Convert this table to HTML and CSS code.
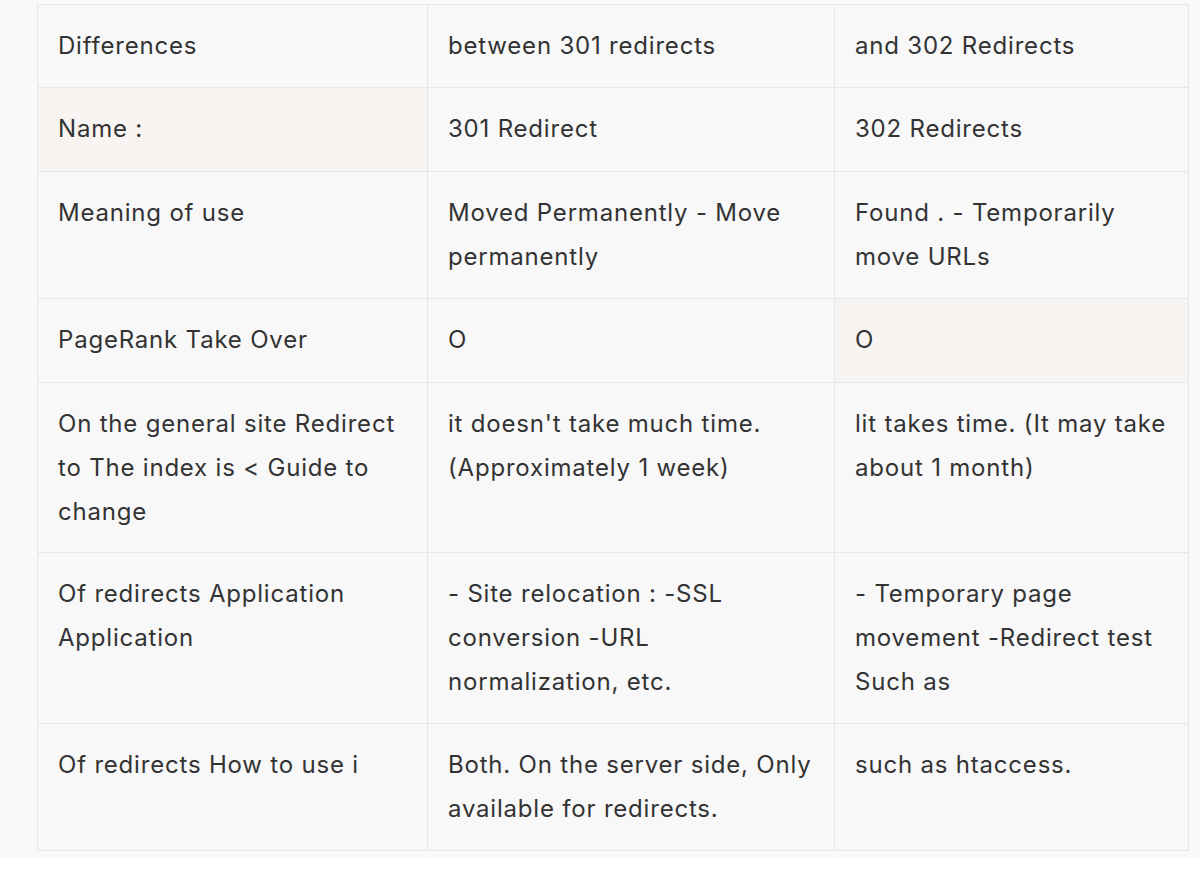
FILE: index.html
```html
<!DOCTYPE html>
<html lang="en">
<head>
<meta charset="utf-8">
<title>301 vs 302 Redirects</title>
<link rel="stylesheet" href="styles.css">
</head>
<body>
<div class="sheet">
  <table class="compare">
    <colgroup>
      <col class="c1"><col class="c2"><col class="c3">
    </colgroup>
    <tbody>
      <tr>
        <td>Differences</td>
        <td>between 301 redirects</td>
        <td>and 302 Redirects</td>
      </tr>
      <tr class="r-84">
        <td class="tint">Name :</td>
        <td>301 Redirect</td>
        <td>302 Redirects</td>
      </tr>
      <tr>
        <td>Meaning of use</td>
        <td>Moved Permanently - Move<br>permanently</td>
        <td>Found . - Temporarily<br>move URLs</td>
      </tr>
      <tr class="r-84">
        <td>PageRank Take Over</td>
        <td>O</td>
        <td class="tint">O</td>
      </tr>
      <tr class="r-170">
        <td>On the general site Redirect<br>to The index is &lt; Guide to<br>change</td>
        <td>it doesn't take much time.<br>(Approximately 1 week)</td>
        <td>lit takes time. (It may take<br>about 1 month)</td>
      </tr>
      <tr>
        <td>Of redirects Application<br>Application</td>
        <td>- Site relocation : -SSL<br>conversion -URL<br>normalization, etc.</td>
        <td>- Temporary page<br>movement -Redirect test<br>Such as</td>
      </tr>
      <tr>
        <td>Of redirects How to use i</td>
        <td>Both. On the server side, Only<br>available for redirects.</td>
        <td>such as htaccess.</td>
      </tr>
    </tbody>
  </table>
</div>
</body>
</html>
```

FILE: styles.css
```css
html, body {
  margin: 0;
  padding: 0;
  background: #ffffff;
}

.sheet {
  background: #f9f9fa;
  padding: 4px 11px 7px 37px;
}

.compare {
  border-collapse: collapse;
  table-layout: fixed;
  width: 1151px;
  background: #f8f8f9;
  font-family: "Inter", "Liberation Sans", sans-serif;
  font-size: 24px;
  letter-spacing: 0.8px;
  color: #333333;
}

.compare .c1 { width: 390px; }
.compare .c2 { width: 407px; }
.compare .c3 { width: 354px; }

.compare td {
  border: 1px solid #e4e7ea;
  padding: 19px 20px 19px 20px;
  line-height: 44px;
  vertical-align: top;
  white-space: nowrap;
}

.compare .r-84 td {
  padding-bottom: 20px;
}

.compare .r-170 td {
  padding-bottom: 18px;
}

.compare td.tint {
  background: #f8f4f2;
}
```
